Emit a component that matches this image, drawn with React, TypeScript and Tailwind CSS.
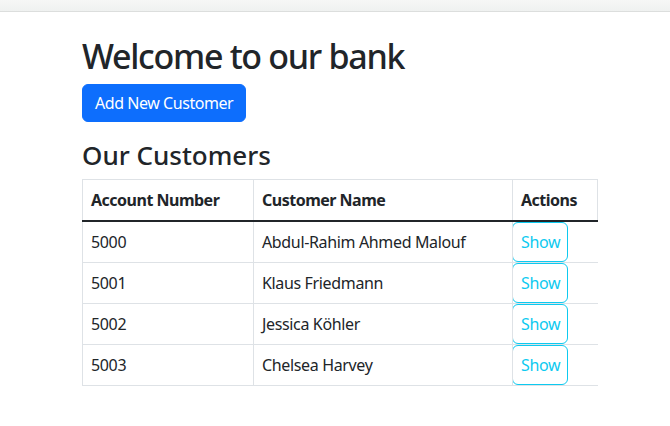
import React from 'react';

const customers = [
  { account: '5000', name: 'Abdul-Rahim Ahmed Malouf' },
  { account: '5001', name: 'Klaus Friedmann' },
  { account: '5002', name: 'Jessica Köhler' },
  { account: '5003', name: 'Chelsea Harvey' },
];

const App: React.FC = () => {
  return (
    <div className="min-h-screen bg-white text-[#212529] font-['Noto_Sans',sans-serif]">
      {/* browser-ish strip on top */}
      <div className="h-[12px] bg-gradient-to-b from-[#f6f7f6] to-[#eff1f0] border-b border-[#dcdedd]" />

      <div className="pl-[82px] w-[598px]">
        <h1 className="mt-[23px] mb-[7px] text-[34px] leading-[42px] font-medium tracking-[-1.3px]">Welcome to our bank</h1>
        <button className="h-[38px] px-[12px] rounded-[6px] bg-[#0d6efd] text-white text-[16px] leading-[24px] tracking-[-0.45px] border border-[#0d6efd]">
          Add New Customer
        </button>

        <h2 className="mt-[18px] mb-[8px] text-[26px] leading-[31px] font-medium">Our Customers</h2>

        <table className="w-[515px] table-fixed border-collapse text-[16px] leading-[24px]">
          <colgroup>
            <col className="w-[171px]" />
            <col className="w-[259px]" />
            <col className="w-[85px]" />
          </colgroup>
          <thead>
            <tr className="border-t border-[#dee2e6]">
              <th className="text-left font-bold tracking-[-0.5px] px-2 py-2 border-l border-r border-[#dee2e6] border-b-2 border-b-[#212529]">
                Account Number
              </th>
              <th className="text-left font-bold tracking-[-0.5px] px-2 py-2 border-l border-r border-[#dee2e6] border-b-2 border-b-[#212529]">
                Customer Name
              </th>
              <th className="text-left font-bold tracking-[-0.5px] px-2 py-2 border-l border-r border-[#dee2e6] border-b-2 border-b-[#212529]">
                Actions
              </th>
            </tr>
          </thead>
          <tbody>
            {customers.map((c) => (
              <tr key={c.account} className="tracking-[-0.35px]">
                <td className="px-2 py-2 border-l border-r border-b border-[#dee2e6]">{c.account}</td>
                <td className="px-2 py-2 border-l border-r border-b border-[#dee2e6]">{c.name}</td>
                <td className="p-0 border-b border-[#dee2e6] align-top">
                  <a className="block -ml-px w-[56px] h-[40px] px-2 py-2 rounded-[6px] border border-[#0dcaf0] text-[#0dcaf0] leading-[22px] cursor-pointer">
                    Show
                  </a>
                </td>
              </tr>
            ))}
          </tbody>
        </table>
      </div>
    </div>
  );
};

export default App;
